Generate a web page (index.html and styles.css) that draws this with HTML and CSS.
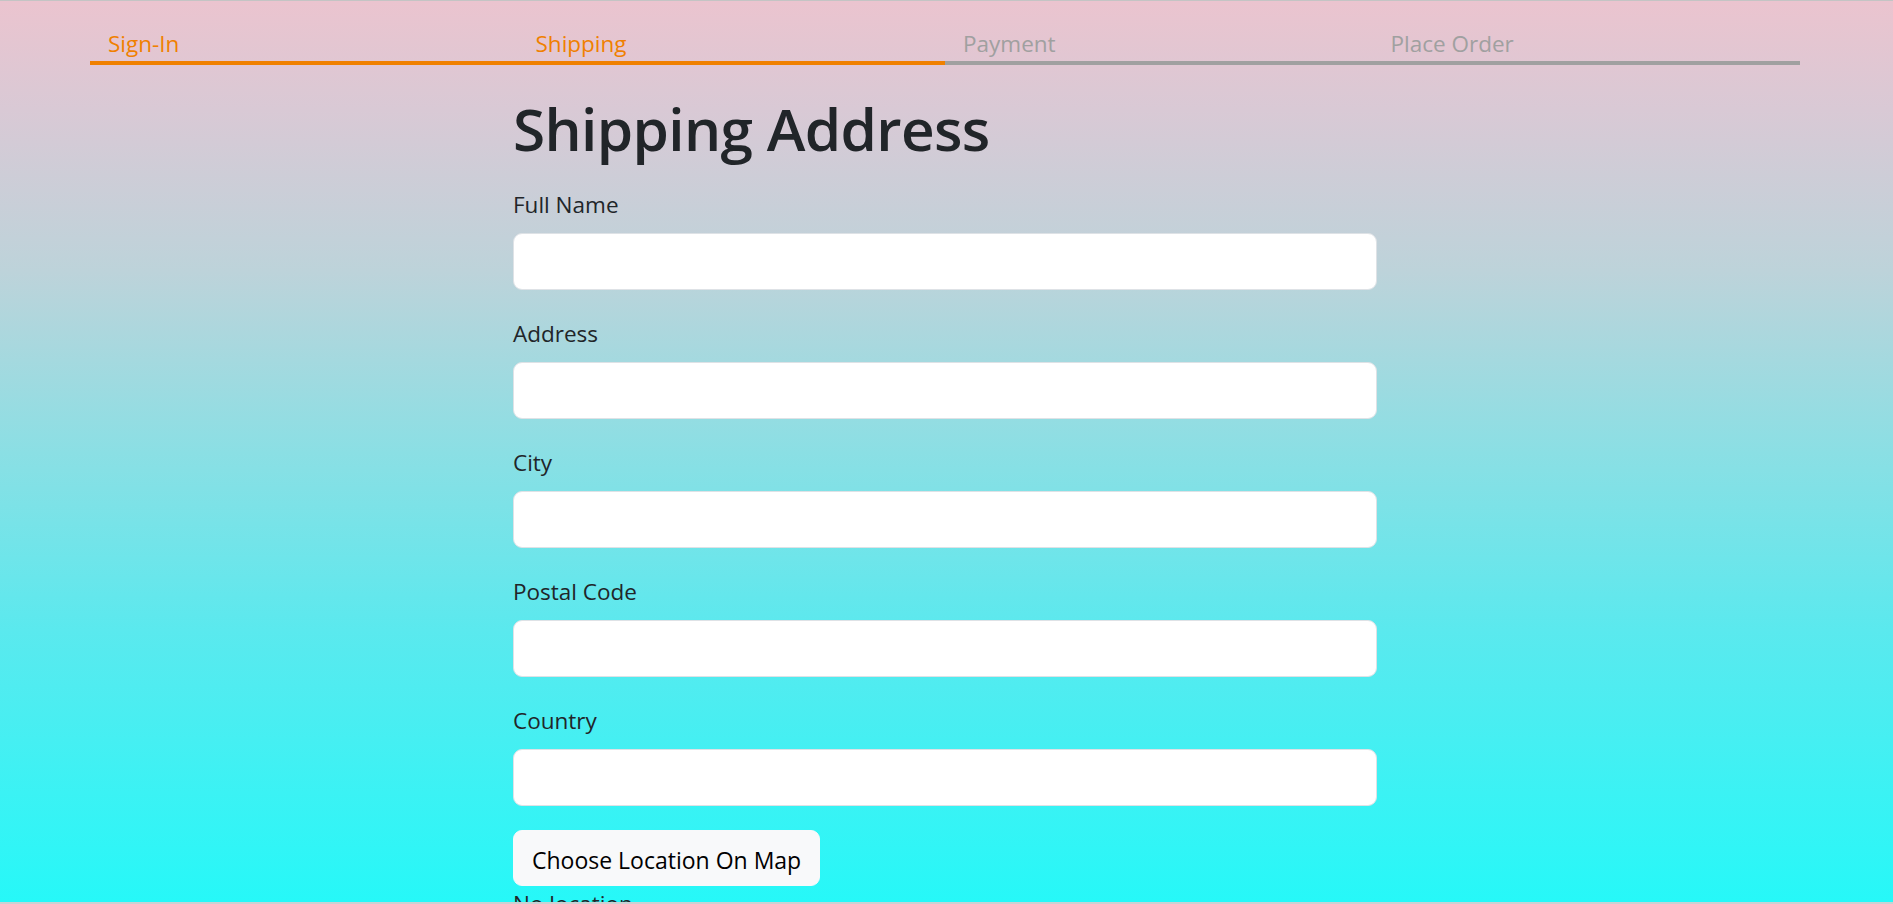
FILE: index.html
```html
<!DOCTYPE html>
<html lang="en">
<head>
<meta charset="utf-8">
<title>Shipping Address</title>
<link rel="stylesheet" href="styles.css">
</head>
<body>
<div class="frame">
  <div class="page">
    <div class="steps">
      <div class="step active">Sign-In</div>
      <div class="step active">Shipping</div>
      <div class="step">Payment</div>
      <div class="step">Place Order</div>
    </div>
    <div class="small-container">
      <h1 class="title">Shipping Address</h1>
      <form class="form">
        <div class="group">
          <label class="label" for="fullName">Full Name</label>
          <input class="control" id="fullName" type="text">
        </div>
        <div class="group">
          <label class="label" for="address">Address</label>
          <input class="control" id="address" type="text">
        </div>
        <div class="group">
          <label class="label" for="city">City</label>
          <input class="control" id="city" type="text">
        </div>
        <div class="group">
          <label class="label" for="postalCode">Postal Code</label>
          <input class="control" id="postalCode" type="text">
        </div>
        <div class="group">
          <label class="label" for="country">Country</label>
          <input class="control" id="country" type="text">
        </div>
        <div class="map-row">
          <button type="button" class="btn-light">Choose Location On Map</button>
          <div class="location">No location</div>
        </div>
      </form>
    </div>
  </div>
</div>
</body>
</html>
```
FILE: styles.css
```css
* { box-sizing: border-box; }
html, body { margin: 0; padding: 0; }
body {
  font-family: "Open Sans", "Noto Sans", sans-serif;
  color: #212529;
  overflow: hidden;
}
.frame {
  height: 904px;
  overflow: hidden;
  border-top: 1px solid #c4c4c4;
  border-bottom: 2px solid #c8d2d3;
  background: linear-gradient(to bottom, #ebc4cf 0%, #d9c9d5 12%, #bdd3da 30%, #8bdfe4 50%, #5ae9ee 70%, #26f8f8 100%);
}
.page {
  width: 1890px;
}
.steps {
  display: flex;
  width: 1710px;
  margin: 24px auto 0;
}
.step {
  flex: 1;
  padding: 1px 18px 0;
  font-size: 22.5px;
  line-height: 35px;
  color: #a0a0a0;
  border-bottom: 4px solid #a0a0a0;
}
.step.active {
  color: #f08000;
  border-bottom-color: #f08000;
}
.small-container {
  width: 900px;
  margin: 0 auto;
  padding: 0 18px;
}
.title {
  margin: 27px 0 21px;
  font-size: 58.5px;
  line-height: 72px;
  font-weight: 600;
  letter-spacing: -0.65px;
  color: #212529;
}
.group {
  margin-bottom: 24px;
}
.label {
  display: block;
  padding-top: 2px;
  margin-bottom: 10px;
  font-size: 22.5px;
  line-height: 36px;
}
.control {
  display: block;
  width: 100%;
  height: 57px;
  border: 1px solid #dee2e6;
  border-radius: 9px;
  background: #fff;
  font: inherit;
  font-size: 22.5px;
  padding: 9px 18px;
}
.btn-light {
  font-family: inherit;
  font-size: 23px;
  line-height: 36px;
  padding: 11px 18px 7px;
  color: #000;
  background: #f8f9fa;
  border: 1px solid #f8f9fa;
  border-radius: 9px;
  cursor: pointer;
}
.location {
  font-size: 22.5px;
  line-height: 36px;
}
```
